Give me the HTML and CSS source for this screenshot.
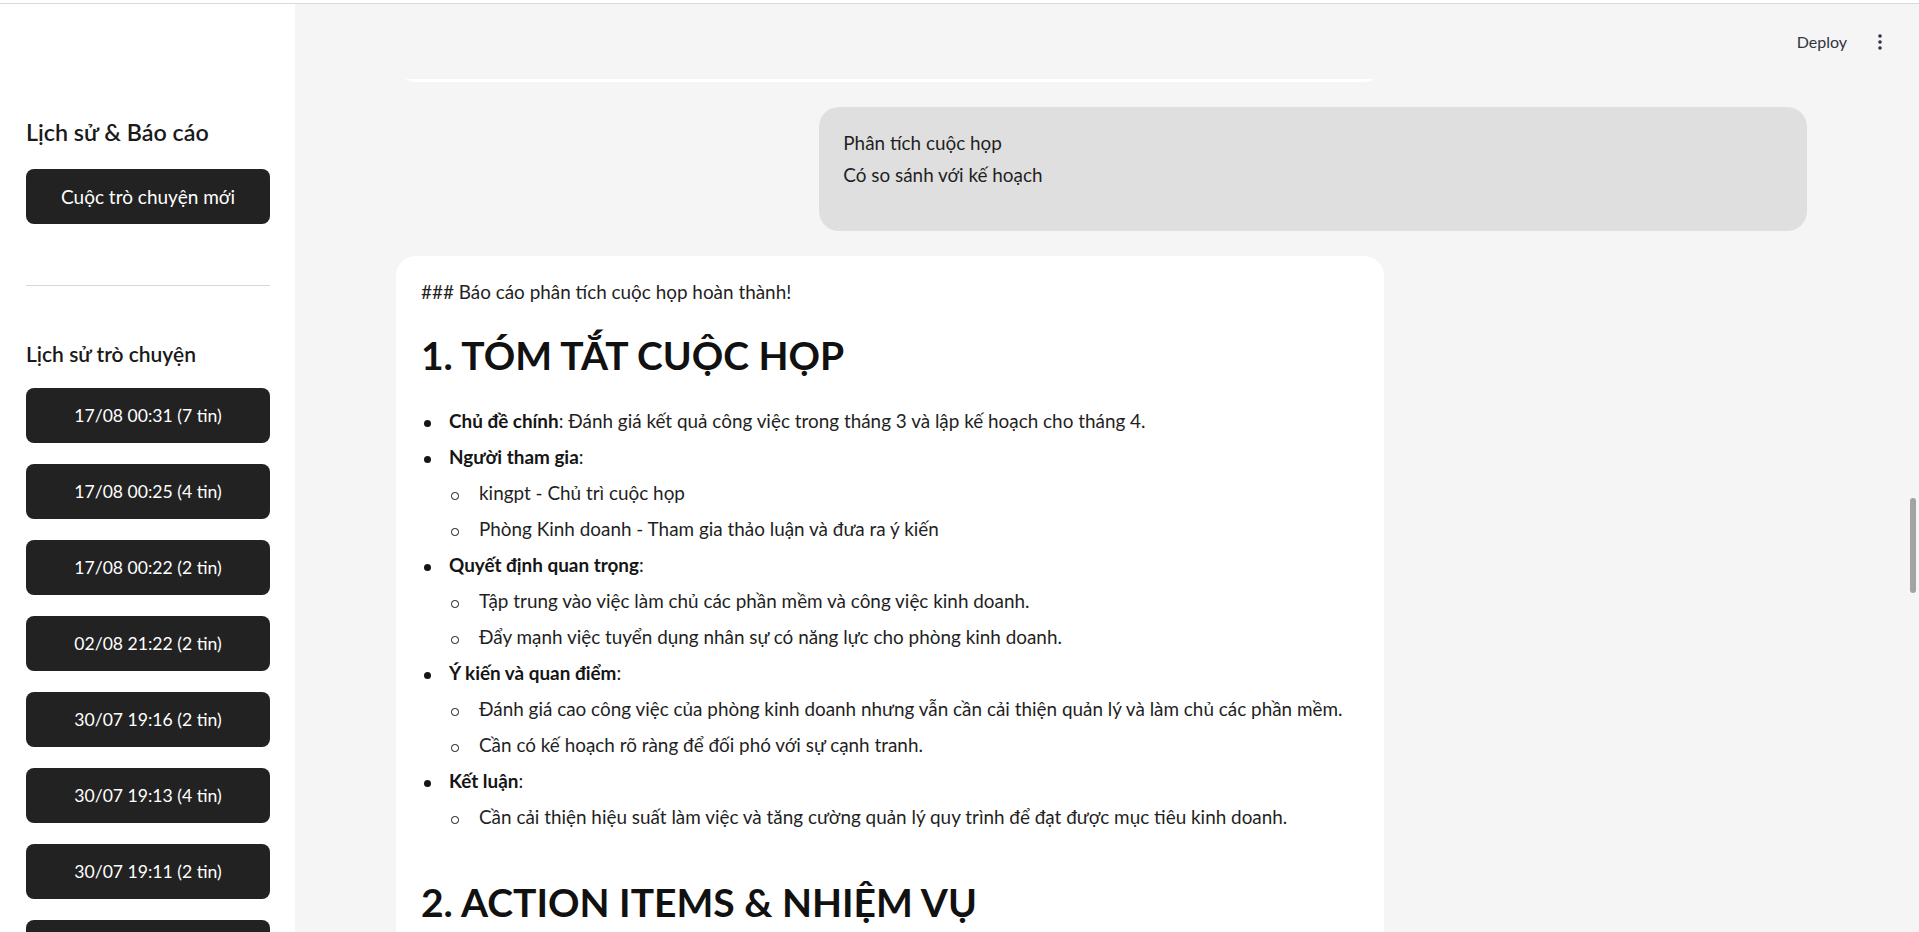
FILE: index.html
```html
<!DOCTYPE html>
<html lang="vi">
<head>
<meta charset="utf-8">
<title>Phân tích cuộc họp</title>
<link rel="stylesheet" href="styles.css">
</head>
<body>
<div class="topline"></div>
<div class="app">
  <aside class="sidebar">
    <h3 class="side-title">Lịch sử &amp; Báo cáo</h3>
    <button class="side-btn new-btn">Cuộc trò chuyện mới</button>
    <hr class="side-divider">
    <h4 class="side-subtitle">Lịch sử trò chuyện</h4>
    <div class="history">
      <button class="side-btn hist-btn">17/08 00:31 (7 tin)</button>
      <button class="side-btn hist-btn">17/08 00:25 (4 tin)</button>
      <button class="side-btn hist-btn">17/08 00:22 (2 tin)</button>
      <button class="side-btn hist-btn">02/08 21:22 (2 tin)</button>
      <button class="side-btn hist-btn">30/07 19:16 (2 tin)</button>
      <button class="side-btn hist-btn">30/07 19:13 (4 tin)</button>
      <button class="side-btn hist-btn">30/07 19:11 (2 tin)</button>
      <button class="side-btn hist-btn">30/07 19:05 (2 tin)</button>
      <button class="side-btn hist-btn">29/07 10:42 (3 tin)</button>
    </div>
  </aside>
  <main class="main">
    <header class="topbar">
      <span class="deploy">Deploy</span>
      <svg class="kebab" width="16" height="16" viewBox="0 0 16 16" aria-hidden="true">
        <circle cx="8" cy="2" r="1.8" fill="#31333f"/>
        <circle cx="8" cy="8" r="1.8" fill="#31333f"/>
        <circle cx="8" cy="14" r="1.8" fill="#31333f"/>
      </svg>
    </header>
    <div class="chat">
      <div class="msg prev"></div>
      <div class="msg user">
        <p>Phân tích cuộc họp<br>Có so sánh với kế hoạch</p>
      </div>
      <div class="msg card">
        <p>### Báo cáo phân tích cuộc họp hoàn thành!</p>
        <h1>1. TÓM TẮT CUỘC HỌP</h1>
        <ul class="list">
          <li><strong>Chủ đề chính</strong>: Đánh giá kết quả công việc trong tháng 3 và lập kế hoạch cho tháng 4.</li>
          <li><strong>Người tham gia</strong>:
            <ul class="sublist">
              <li>kingpt - Chủ trì cuộc họp</li>
              <li>Phòng Kinh doanh - Tham gia thảo luận và đưa ra ý kiến</li>
            </ul>
          </li>
          <li><strong>Quyết định quan trọng</strong>:
            <ul class="sublist">
              <li>Tập trung vào việc làm chủ các phần mềm và công việc kinh doanh.</li>
              <li>Đẩy mạnh việc tuyển dụng nhân sự có năng lực cho phòng kinh doanh.</li>
            </ul>
          </li>
          <li><strong>Ý kiến và quan điểm</strong>:
            <ul class="sublist">
              <li>Đánh giá cao công việc của phòng kinh doanh nhưng vẫn cần cải thiện quản lý và làm chủ các phần mềm.</li>
              <li>Cần có kế hoạch rõ ràng để đối phó với sự cạnh tranh.</li>
            </ul>
          </li>
          <li><strong>Kết luận</strong>:
            <ul class="sublist">
              <li>Cần cải thiện hiệu suất làm việc và tăng cường quản lý quy trình để đạt được mục tiêu kinh doanh.</li>
            </ul>
          </li>
        </ul>
        <h1 class="h-next">2. ACTION ITEMS &amp; NHIỆM VỤ</h1>
        <ul class="list">
          <li><strong>Nhiệm vụ 1</strong>: Đào tạo nhân viên sử dụng thành thạo các phần mềm.</li>
          <li><strong>Nhiệm vụ 2</strong>: Tuyển dụng nhân sự cho phòng kinh doanh.</li>
        </ul>
      </div>
    </div>
    <div class="scroll-thumb"></div>
  </main>
</div>
</body>
</html>
```

FILE: styles.css
```css
html, body {
  margin: 0;
  height: 100%;
}

body {
  font-family: Lato, "Noto Sans", sans-serif;
  background: #ffffff;
  color: #1f1f24;
  overflow: hidden;
}

.topline {
  height: 3px;
  background: #ffffff;
  border-bottom: 1px solid #dadada;
}

.app {
  display: flex;
  height: 928px;
}

/* ---------- Sidebar ---------- */
.sidebar {
  width: 295px;
  flex: none;
  box-sizing: border-box;
  padding: 113px 25px 0 26px;
  background: #ffffff;
  overflow: hidden;
}

.side-title {
  margin: 0;
  font-size: 23.3px;
  line-height: 30px;
  font-weight: 600;
  color: #1a1a1a;
}

.side-btn {
  display: flex;
  align-items: center;
  justify-content: center;
  width: 100%;
  height: 55px;
  flex: none;
  padding: 0;
  border: none;
  border-radius: 8px;
  background: #222222;
  color: #ffffff;
  font-family: inherit;
  font-size: 19px;
  font-weight: 400;
}

.new-btn {
  margin-top: 22px;
}

.side-divider {
  margin: 61px 0 0;
  height: 0;
  border: none;
  border-top: 1px solid #d6d6d6;
}

.side-subtitle {
  margin: 55px 0 0;
  font-size: 21px;
  line-height: 26px;
  font-weight: 600;
  color: #1a1a1a;
}

.history {
  display: flex;
  flex-direction: column;
  gap: 21px;
  margin-top: 21px;
}

.hist-btn {
  font-size: 17.6px;
}

/* ---------- Main ---------- */
.main {
  flex: 1;
  position: relative;
  background: #f5f5f5;
  overflow: hidden;
}

.topbar {
  position: absolute;
  top: 0;
  left: 0;
  right: 0;
  height: 75px;
  z-index: 2;
  display: flex;
  align-items: center;
  justify-content: flex-end;
  gap: 25px;
  padding-right: 31px;
  background: #f5f5f5;
}

.deploy {
  font-size: 16px;
  line-height: 20px;
  color: #31333f;
}

.kebab {
  display: block;
}

.chat {
  display: flex;
  flex-direction: column;
  padding: 38px 112px 0 101px;
}

.msg {
  width: 70%;
  box-sizing: border-box;
}

.prev {
  height: 40px;
  align-self: flex-start;
  background: #ffffff;
  border-radius: 20px;
}

.user {
  align-self: flex-end;
  margin-top: 25px;
  padding: 20px 24px 40px;
  background: #dfdfdf;
  border-radius: 20px;
}

.user p {
  margin: 0;
  font-size: 18.9px;
  line-height: 32px;
}

.card {
  align-self: flex-start;
  margin-top: 25px;
  padding: 20px 25px 40px;
  background: #ffffff;
  border-radius: 20px;
  font-size: 18.9px;
  line-height: 32px;
}

.card p {
  margin: 0;
}

.card h1 {
  margin: 23px 0 26px;
  font-size: 39px;
  line-height: 48px;
  font-weight: 700;
  color: #111111;
}

.card h1.h-next {
  margin-top: 45px;
}

.card strong {
  font-weight: 700;
  color: #151515;
}

.list,
.sublist {
  list-style: none;
  margin: 0;
  padding: 0 0 0 28px;
}

.sublist {
  padding-left: 30px;
}

.list li {
  position: relative;
  margin-top: 4px;
}

.list > li::before {
  content: "";
  position: absolute;
  left: -25.5px;
  top: 15px;
  width: 7px;
  height: 7px;
  border-radius: 50%;
  background: #151515;
}

.sublist > li::before {
  content: "";
  position: absolute;
  left: -28px;
  top: 15px;
  width: 5.5px;
  height: 5.5px;
  border: 1.2px solid #151515;
  border-radius: 50%;
  background: transparent;
}

.scroll-thumb {
  position: absolute;
  top: 494px;
  right: 3px;
  width: 6px;
  height: 95px;
  border-radius: 3px;
  background: #a3a3a3;
}
```
